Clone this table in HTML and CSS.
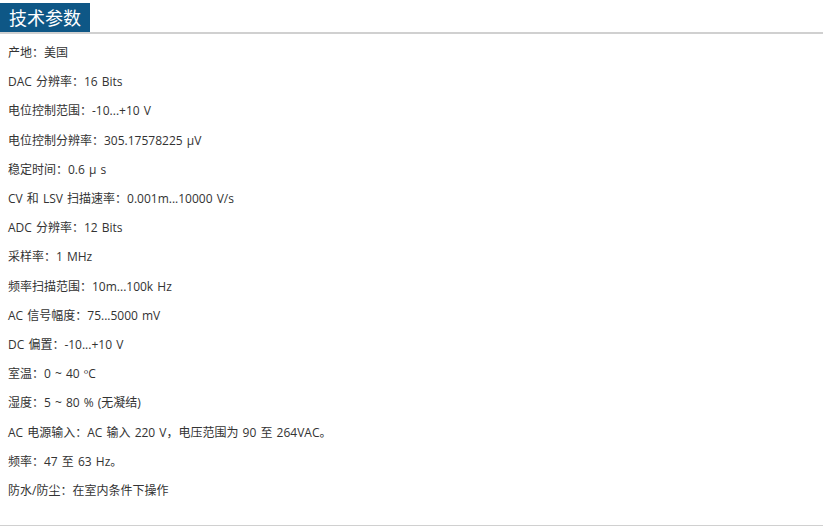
FILE: index.html
```html
<!DOCTYPE html>
<html lang="zh-CN">
    <head>
        <meta charset="UTF-8">
        <title>技术参数</title>
        <link rel="stylesheet" href="styles.css">
    </head>
    <body>

        <div class="params">
            <div class="params-head">
                <h3>技术参数</h3>
            </div>

            <div class="params-body">
                <p>产地：美国</p>
                <p>DAC 分辨率：16 Bits</p>
                <p>电位控制范围：-10...+10 V</p>
                <p>电位控制分辨率：305.17578225 µV</p>
                <p>稳定时间：0.6 μ s</p>
                <p>CV 和 LSV 扫描速率：0.001m...10000 V/s</p>
                <p>ADC 分辨率：12 Bits</p>
                <p>采样率：1 MHz</p>
                <p>频率扫描范围：10m...100k Hz</p>
                <p>AC 信号幅度：75...5000 mV</p>
                <p>DC 偏置：-10...+10 V</p>
                <p>室温：0 ~ 40 ºC</p>
                <p>湿度：5 ~ 80 % (无凝结)</p>
                <p>AC 电源输入：AC 输入 220 V，电压范围为 90 至 264VAC。</p>
                <p>频率：47 至 63 Hz。</p>
                <p>防水/防尘：在室内条件下操作</p>
            </div>
        </div>

    </body>
</html>
```

FILE: styles.css
```css
body {
    margin: 0;
    background: #fff;
    font-family: "Open Sans", "Noto Sans CJK SC", sans-serif;
    color: #333;
}
.params {
    width: 823px;
    padding-top: 3px;
    border-bottom: 2px solid #d0d0d0;
}
.params-head {
    display: flex;
    border-bottom: 2px solid #d0d0d0;
}
.params-head h3 {
    margin: 0;
    padding: 0 9px;
    height: 29px;
    line-height: 29px;
    font-size: 18px;
    font-weight: normal;
    color: #fff;
    background: #0e5786;
    font-family: "Noto Sans CJK SC", sans-serif;
}
.params-body {
    padding: 4px 8px 20px;
}
.params-body p {
    margin: 0;
    font-size: 12px;
    line-height: 29.2px;
    word-spacing: 1px;
}
```
